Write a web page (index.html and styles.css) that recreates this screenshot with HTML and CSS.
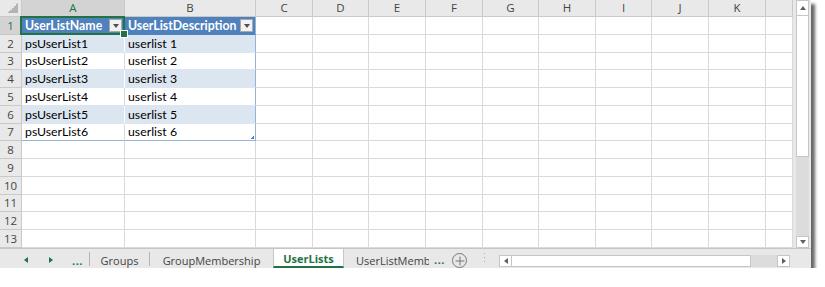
FILE: index.html
```
<!DOCTYPE html>
<html lang="en">
<head>
    <meta charset="UTF-8">
    <title>UserLists</title>
    <link rel="stylesheet" href="styles.css">
</head>
<body>
    <div class="window">
        <!-- Sheet grid -->
        <div class="sheet">
            <table class="grid">
                <colgroup>
                    <col style="width:22px"><col style="width:103px"><col style="width:131px">
                    <col style="width:57px"><col style="width:56px"><col style="width:57px">
                    <col style="width:57px"><col style="width:56px"><col style="width:57px">
                    <col style="width:56px"><col style="width:57px"><col style="width:57px">
                    <col style="width:27px">
                </colgroup>
                <tr class="ch">
                    <th class="corner"></th><th class="sel">A</th><th>B</th><th>C</th><th>D</th><th>E</th>
                    <th>F</th><th>G</th><th>H</th><th>I</th><th>J</th><th>K</th><th></th>
                </tr>
                <tr class="r18">
                    <th class="rh sel">1</th>
                    <td class="thead cursor"><div class="hcell"><span>UserListName</span><i class="drop"></i></div></td>
                    <td class="thead edge"><div class="hcell"><span>UserListDescription</span><i class="drop"></i></div></td>
                    <td></td><td></td><td></td><td></td><td></td><td></td><td></td><td></td><td></td><td></td>
                </tr>
                <tr class="r18 band">
                    <th class="rh">2</th><td>psUserList1</td><td class="edge">userlist 1</td>
                    <td></td><td></td><td></td><td></td><td></td><td></td><td></td><td></td><td></td><td></td>
                </tr>
                <tr class="r17 plain">
                    <th class="rh">3</th><td>psUserList2</td><td class="edge">userlist 2</td>
                    <td></td><td></td><td></td><td></td><td></td><td></td><td></td><td></td><td></td><td></td>
                </tr>
                <tr class="r18 band">
                    <th class="rh">4</th><td>psUserList3</td><td class="edge">userlist 3</td>
                    <td></td><td></td><td></td><td></td><td></td><td></td><td></td><td></td><td></td><td></td>
                </tr>
                <tr class="r18 plain">
                    <th class="rh">5</th><td>psUserList4</td><td class="edge">userlist 4</td>
                    <td></td><td></td><td></td><td></td><td></td><td></td><td></td><td></td><td></td><td></td>
                </tr>
                <tr class="r18 band">
                    <th class="rh">6</th><td>psUserList5</td><td class="edge">userlist 5</td>
                    <td></td><td></td><td></td><td></td><td></td><td></td><td></td><td></td><td></td><td></td>
                </tr>
                <tr class="r17 plain last">
                    <th class="rh">7</th><td>psUserList6</td><td class="edge resize">userlist 6</td>
                    <td></td><td></td><td></td><td></td><td></td><td></td><td></td><td></td><td></td><td></td>
                </tr>
                <tr class="r18">
                    <th class="rh">8</th><td></td><td></td>
                    <td></td><td></td><td></td><td></td><td></td><td></td><td></td><td></td><td></td><td></td>
                </tr>
                <tr class="r18">
                    <th class="rh">9</th><td></td><td></td>
                    <td></td><td></td><td></td><td></td><td></td><td></td><td></td><td></td><td></td><td></td>
                </tr>
                <tr class="r18">
                    <th class="rh">10</th><td></td><td></td>
                    <td></td><td></td><td></td><td></td><td></td><td></td><td></td><td></td><td></td><td></td>
                </tr>
                <tr class="r17">
                    <th class="rh">11</th><td></td><td></td>
                    <td></td><td></td><td></td><td></td><td></td><td></td><td></td><td></td><td></td><td></td>
                </tr>
                <tr class="r18">
                    <th class="rh">12</th><td></td><td></td>
                    <td></td><td></td><td></td><td></td><td></td><td></td><td></td><td></td><td></td><td></td>
                </tr>
                <tr class="r18">
                    <th class="rh">13</th><td></td><td></td>
                    <td></td><td></td><td></td><td></td><td></td><td></td><td></td><td></td><td></td><td></td>
                </tr>
            </table>
        </div>

        <!-- Vertical scrollbar -->
        <div class="vscroll">
            <div class="sbtn up"></div>
            <div class="vthumb"></div>
            <div class="vtrack"></div>
            <div class="sbtn down"></div>
        </div>

        <!-- Sheet tabs -->
        <div class="tabbar">
            <div class="nav">
                <i class="arrow left"></i>
                <i class="arrow right"></i>
                <span class="more">...</span>
            </div>
            <span class="sep"></span>
            <div class="tab groups">Groups</div>
            <span class="sep"></span>
            <div class="tab membership">GroupMembership</div>
            <div class="tab current">UserLists</div>
            <div class="tab clipped"><span>UserListMembership</span></div>
            <span class="more after">...</span>
            <span class="add"></span>
            <span class="dots"></span>
            <div class="hscroll">
                <div class="sbtn hleft"></div>
                <div class="hthumb"></div>
                <div class="htrack"></div>
                <div class="sbtn hright"></div>
            </div>
        </div>
    </div>
</body>
</html>
```

FILE: styles.css
```
* {
    margin: 0;
    padding: 0;
    box-sizing: border-box;
}
body {
    background-color: #fff;
    font-family: 'Lato', sans-serif;
}
.window {
    width: 811px;
    height: 268px;
    background-color: #e8e8e8;
    display: grid;
    grid-template-columns: 793px 18px;
    grid-template-rows: 248px 20px;
    box-shadow: 4px 4px 3px rgba(0, 0, 0, 0.6);
}
.sheet {
    background-color: #fff;
    overflow: hidden;
}
.grid {
    border-collapse: separate;
    border-spacing: 0;
    table-layout: fixed;
    width: 793px;
}
.grid th,
.grid td {
    border-right: 1px solid #dadada;
    border-bottom: 1px solid #dadada;
    padding: 0 3px;
    font-size: 12.3px;
    line-height: 16px;
    font-weight: normal;
    text-align: left;
    white-space: nowrap;
    color: #000;
}
.r18 {
    height: 18px;
}
.r17 {
    height: 17px;
}
.ch {
    height: 17px;
}
.ch th {
    background-color: #e9e9e9;
    border-color: #c9c9c9;
    font-family: 'Open Sans', sans-serif;
    font-size: 11.5px;
    color: #444;
    text-align: center;
    padding: 0;
}
.grid .rh {
    background-color: #e9e9e9;
    border-color: #c9c9c9;
    font-family: 'Open Sans', sans-serif;
    font-size: 11.5px;
    color: #444;
    text-align: center;
    padding: 0;
}
.grid .sel {
    background-color: #d3d3d3;
    color: #217346;
}
.ch .sel {
    border-bottom: 1px solid #217346;
}
.grid .rh.sel {
    border-right: 1px solid #217346;
}
.corner {
    position: relative;
}
.corner::after {
    content: "";
    position: absolute;
    right: 3px;
    bottom: 3px;
    width: 10px;
    height: 10px;
    background: linear-gradient(to top left, #b4b4b4 50%, transparent 50%);
}

/* Table */
.grid .thead {
    background-color: #4f81bd;
    color: #fff;
    font-weight: bold;
    padding: 0 2px 0 3px;
    border-right-color: #4f81bd;
    border-bottom-color: #4f81bd;
}
.grid .thead.edge {
    border-right-color: #95b3d7;
}
.hcell {
    display: flex;
    justify-content: space-between;
    align-items: center;
}
.drop {
    width: 13px;
    height: 13px;
    background-color: #f2f2f2;
    border: 1px solid #a8a8a8;
    display: flex;
    justify-content: center;
    align-items: center;
}
.drop::after {
    content: "";
    border-left: 3.5px solid transparent;
    border-right: 3.5px solid transparent;
    border-top: 4px solid #505050;
}
.band td:nth-of-type(-n+2) {
    background-color: #dce6f1;
    border-bottom-color: #dce6f1;
    border-right-color: #fff;
}
.plain td:nth-of-type(-n+2) {
    border-bottom-color: #dce6f1;
}
.grid td.edge {
    border-right-color: #95b3d7;
}
.last td:nth-of-type(-n+2) {
    border-bottom-color: #95b3d7;
}
.cursor {
    position: relative;
}
.cursor::before {
    content: "";
    position: absolute;
    left: -2px;
    top: -1px;
    right: -1px;
    bottom: -1px;
    border: 2px solid #217346;
    z-index: 2;
}
.cursor::after {
    content: "";
    position: absolute;
    right: -4px;
    bottom: -4px;
    width: 6px;
    height: 6px;
    background-color: #217346;
    border: 1px solid #fff;
    z-index: 3;
}
.resize {
    position: relative;
}
.resize::after {
    content: "";
    position: absolute;
    right: 1px;
    bottom: 1px;
    width: 4px;
    height: 4px;
    background: linear-gradient(to top left, #4f81bd 50%, transparent 50%);
}

/* Scrollbars */
.sbtn {
    background-color: #fff;
    border: 1px solid #c6c6c6;
    display: flex;
    justify-content: center;
    align-items: center;
}
.sbtn::after {
    content: "";
}
.vscroll {
    padding: 0 2px 0 3px;
    display: flex;
    flex-direction: column;
}
.up {
    height: 16px;
}
.up::after {
    border-left: 3.5px solid transparent;
    border-right: 3.5px solid transparent;
    border-bottom: 4px solid #606060;
}
.vthumb {
    height: 141px;
    background-color: #fff;
    border: 1px solid #c6c6c6;
    border-top: none;
}
.vtrack {
    flex: 1;
    background-color: #dcdcdc;
}
.down {
    height: 12px;
}
.down::after {
    border-left: 3.5px solid transparent;
    border-right: 3.5px solid transparent;
    border-top: 4px solid #606060;
}

/* Tab bar */
.tabbar {
    grid-column: 1 / span 2;
    border-top: 1px solid #c6c6c6;
    display: flex;
    align-items: stretch;
    font-family: 'Open Sans', sans-serif;
    font-size: 11px;
    color: #444;
}
.nav {
    width: 89px;
    display: flex;
    align-items: center;
    padding: 2px 0 0 24px;
}
.arrow {
    width: 0;
    height: 0;
    border-top: 3.5px solid transparent;
    border-bottom: 3.5px solid transparent;
}
.arrow.left {
    border-right: 4px solid #217346;
    margin-right: 21px;
}
.arrow.right {
    border-left: 4px solid #217346;
    margin-right: 19px;
}
.more {
    color: #217346;
    font-weight: bold;
    font-size: 11px;
    letter-spacing: 0.5px;
    padding-top: 2px;
    display: flex;
    align-items: center;
}
.sep {
    width: 1px;
    background-color: #b4b4b4;
    margin: 3px 0 2px;
}
.tab {
    display: flex;
    align-items: center;
    justify-content: center;
    padding-top: 3px;
    white-space: nowrap;
}
.groups {
    width: 59px;
}
.membership {
    width: 123px;
}
.tab.current {
    width: 71px;
    background-color: #fff;
    color: #217346;
    font-weight: bold;
    border-left: 1px solid #c6c6c6;
    border-right: 1px solid #c6c6c6;
    border-bottom: 2px solid #217346;
    padding-top: 2px;
}
.clipped {
    width: 85px;
    overflow: hidden;
    justify-content: flex-start;
    padding-left: 12px;
}
.clipped span {
    flex: none;
}
.more.after {
    width: 16px;
    padding-left: 5px;
}
.add {
    width: 15px;
    height: 15px;
    margin: 4px 0 0 7px;
    border: 1px solid #777;
    border-radius: 50%;
    position: relative;
}
.add::before,
.add::after {
    content: "";
    position: absolute;
    background-color: #777;
    left: 50%;
    top: 50%;
    transform: translate(-50%, -50%);
}
.add::before {
    width: 9px;
    height: 1px;
}
.add::after {
    width: 1px;
    height: 9px;
}
.dots {
    width: 1px;
    margin: 4px 0 3px 17px;
    background: repeating-linear-gradient(to bottom, #a8a8a8 0 1px, transparent 1px 4px);
}
.hscroll {
    width: 291px;
    margin: 6px 0 1px 14px;
    display: flex;
}
.hleft,
.hright {
    width: 13px;
}
.hleft::after {
    border-top: 3.5px solid transparent;
    border-bottom: 3.5px solid transparent;
    border-right: 4px solid #606060;
}
.hright::after {
    border-top: 3.5px solid transparent;
    border-bottom: 3.5px solid transparent;
    border-left: 4px solid #606060;
}
.hthumb {
    width: 239px;
    background-color: #fff;
    border: 1px solid #c6c6c6;
    border-left: none;
}
.htrack {
    flex: 1;
    background-color: #dcdcdc;
}
```
